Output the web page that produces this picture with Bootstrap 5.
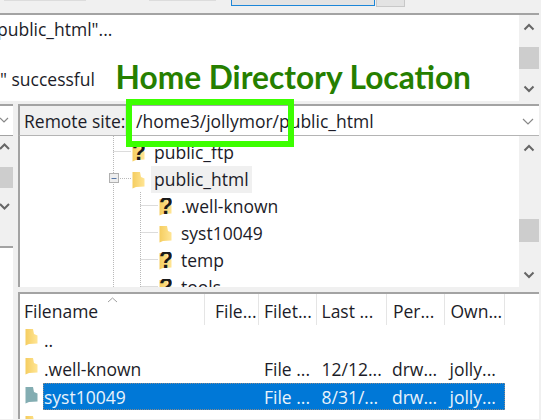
<!DOCTYPE html>
<html lang="en">
<head>
<meta charset="utf-8">
<title>FileZilla home directory location</title>
<link href="https://cdn.jsdelivr.net/npm/bootstrap@5.3.0/dist/css/bootstrap.min.css" rel="stylesheet">
<style>
html,body{margin:0;height:420px;overflow:hidden}
body{background:#f0f0f0;color:#1c1c28;font:17.5px/1 "Open Sans","Noto Sans",sans-serif;width:541px;position:relative}
.fz-top{height:13px}
.fz-stub{height:1px;background:#dcdcdc}
.fz-stub1{width:82px;margin-left:4px}
.fz-stub2{width:67px;margin-left:63px}
.fz-input{width:144px;height:6px;margin-left:15px;background:#e3e3e3;border:1px solid #1c86d8;border-top:0}
.fz-btn{width:29px;height:7px;margin-left:1px;background:#e3e3e3;border:1px solid #c8c8c8;border-top:0}
.fz-log{height:88px;background:#fff;border-top:2px solid #a3a3a3;margin-right:2px}
.fz-logtext{padding-top:5px;white-space:nowrap;overflow:hidden}
.fz-l1{margin:0 0 0 -3px;height:51px;padding-top:1px}
.fz-l2{margin:0;padding-top:0}
.fz-split{height:3px}
.fz-sb{width:20px;background:#f0f0f0;flex:none}
.fz-sb svg{display:block;width:12px;height:8px;stroke:#666;stroke-width:2;fill:none}
.fz-thumb{background:#cdcdcd;width:100%}
.fz-left{width:13px;flex:none;height:315px;background:#fff}
.fz-leftcombo{height:32px;border-top:2px solid #a3a3a3;border-bottom:1px solid #a3a3a3;padding-top:11px}
.fz-leftcombo svg{display:block;width:10px;height:6px;margin-left:-1px;stroke:#888;stroke-width:1.2;fill:none}
.fz-leftsb{height:112px;background:#f0f0f0;border-bottom:2px solid #a3a3a3;padding-top:7px}
.fz-leftsb svg{display:block;width:11px;height:7px;margin-left:-1px;stroke:#666;stroke-width:2;fill:none}
.fz-leftthumb{height:21px;background:#cdcdcd;margin:17px 0 15px}
.fz-right{width:521px;margin-left:5px;flex:none}
.fz-site{height:32px;border-top:2px solid #a3a3a3;border-bottom:1px solid #b4b4b4;border-left:2px solid #a3a3a3}
.fz-sitelabel{width:106px;flex:none;white-space:nowrap;padding:2px 0 0 4px;background:#f0f0f0;border-right:1px solid #dcdcdc}
.fz-combo{background:#fff;padding:2px 0 0 10px}
.fz-combo svg{width:12px;height:7px;stroke:#888;stroke-width:1.2;fill:none;margin-right:5px}
.fz-tree{height:151px;border-left:2px solid #a3a3a3}
.fz-treebody{background:#fff;position:relative;overflow:hidden;padding-top:3px}
.fz-lines{position:absolute;left:0;top:0;width:498px;height:151px}
.fz-node{height:27px;position:relative}
.fz-lv1{padding-left:112px}
.fz-lv2{padding-left:139px}
.fz-name{margin-left:6px;padding:3px 3px 4px 3px;line-height:20px}
.fz-cur{background:#f0f0f0}
.fz-ic{width:13px;height:18px;flex:none;position:relative;display:block}
.fz-q{font:bold 23px/1 "Liberation Sans",sans-serif;fill:#1a1a1a}
.fz-gap{height:5px}
.fz-list{height:127px;background:#fff;border-top:2px solid #a3a3a3;border-left:2px solid #a3a3a3;position:relative;overflow:hidden}
.fz-cols{display:grid;grid-template-columns:185px 54px 57.5px 70.5px 57.5px 60.5px;width:485px}
.fz-head{height:31px;position:relative}
.fz-head>div{border-right:1px solid #e5e5e5;padding:7px 0 0 5px;white-space:nowrap;line-height:20px;overflow:hidden}
.fz-head>div:first-child{padding-left:4px}
.fz-head>div:nth-child(2){padding-left:10px}
.fz-head>div:nth-child(5),.fz-head>div:nth-child(6){padding-left:6px}
.fz-sort{position:absolute;left:87px;top:3px;width:11px;height:6px;stroke:#a0a0a0;stroke-width:1;fill:none}
.fz-item{height:29px;position:relative}
.fz-cols.fz-item>div{padding:5px 0 0 5px;line-height:20px;white-space:nowrap}
.fz-rowic{width:23px;flex:none;padding:3px 0 0 5px}
.fz-rowwrap{height:29px}
.fz-sel{background:#0078d7;color:#e9f3fb;outline:1px dotted #8a8a8a;outline-offset:-1px;width:462px;height:27px}
.fz-sel.fz-cols{grid-template-columns:162px 54px 57.5px 70.5px 57.5px 60.5px}
.fz-cols.fz-sel>div{padding:4px 0 0 5px;line-height:20px;white-space:nowrap}
.fz-cols.fz-sel>div:first-child{padding-left:1px}
.fz-plain{grid-template-columns:162px 54px 57.5px 70.5px 57.5px 60.5px;width:462px}
.fz-plain.fz-cols>div:first-child{padding-left:1px}
.fz-note{position:absolute;left:115.500px;top:59px;margin:0;color:#267f00;font:bold 31.700px/36px "Lato","Liberation Sans",sans-serif;white-space:nowrap}
.fz-mark{position:absolute;left:126px;top:99px;width:168px;height:48px;border:6px solid #3cff00}
</style>
</head>
<body>
<svg width="0" height="0" class="position-absolute">
  <defs>
    <linearGradient id="fzy" x1="0" x2="1" y1="0" y2="0"><stop offset="0" stop-color="#f5cd60"/><stop offset="1" stop-color="#ffe594"/></linearGradient>
    <symbol id="fzf" viewBox="0 0 13 18"><path d="M.5 1H8L9 6 12.500 7.500V15.500L4 16 .5 17.500Z" fill="url(#fzy)"/></symbol>
    <symbol id="fzt" viewBox="0 0 13 18"><path d="M.5 1H8L9 6 12.500 7.500V15.500L4 16 .5 17.500Z" fill="#83adb2"/></symbol>
  </defs>
</svg>

<div class="fz-top d-flex align-items-start">
  <div class="fz-stub fz-stub1"></div>
  <div class="fz-stub fz-stub2"></div>
  <div class="fz-input"></div>
  <div class="fz-btn"></div>
</div>

<div class="fz-log d-flex">
  <div class="fz-logtext flex-grow-1">
    <p class="fz-l1">public_html"...</p>
    <p class="fz-l2">" successful</p>
  </div>
  <div class="fz-sb d-flex flex-column align-items-center">
    <svg class="mt-2" viewBox="0 0 12 8"><path d="M1.500 6.500 6 2l4.500 4.500"/></svg>
    <div class="fz-thumb mt-auto" style="height:22px"></div>
    <svg class="mt-auto mb-2" viewBox="0 0 12 8"><path d="M1.500 1.500 6 6l4.500-4.500"/></svg>
  </div>
</div>
<div class="fz-split"></div>

<div class="d-flex">
  <div class="fz-left">
    <div class="fz-leftcombo"><svg viewBox="0 0 10 6"><path d="M1 1l4 4 4-4"/></svg></div>
    <div class="fz-leftsb">
      <svg viewBox="0 0 11 7"><path d="M1 6l4.500-4.500L10 6"/></svg>
      <div class="fz-leftthumb"></div>
      <svg viewBox="0 0 11 7"><path d="M1 1l4.500 4.500L10 1"/></svg>
    </div>
  </div>
  <div class="fz-right">
    <div class="fz-site d-flex">
      <div class="fz-sitelabel d-flex align-items-center">Remote site:</div>
      <div class="fz-combo flex-grow-1 d-flex align-items-center justify-content-between">
        <span>/home3/jollymor/public_html</span>
        <svg viewBox="0 0 12 7"><path d="M1 1l5 5 5-5"/></svg>
      </div>
    </div>
    <div class="fz-tree d-flex">
      <div class="fz-treebody flex-grow-1">
        <svg class="fz-lines" viewBox="0 0 498 151">
          <g stroke="#b9b9b9" stroke-dasharray="1 1" fill="none">
            <path d="M93.500 0V151M93.500 15.500H111M98 42.500H111M120.500 56V151M120.500 69.500H138M120.500 96.500H138M120.500 123.500H138M120.500 150.500H138"/>
          </g>
          <rect x="89.500" y="37.500" width="9" height="9" fill="#eee" stroke="#b0b0b0"/>
          <path d="M91.500 42.500h5" stroke="#5878a8"/>
        </svg>
        <div class="fz-node fz-lv1 d-flex align-items-center"><svg class="fz-ic" viewBox="0 0 13 18"><use href="#fzf"/><text class="fz-q" x="0" y="16">?</text></svg><span class="fz-name">public_ftp</span></div>
        <div class="fz-node fz-lv1 d-flex align-items-center"><svg class="fz-ic" viewBox="0 0 13 18"><use href="#fzf"/></svg><span class="fz-name fz-cur">public_html</span></div>
        <div class="fz-node fz-lv2 d-flex align-items-center"><svg class="fz-ic" viewBox="0 0 13 18"><use href="#fzf"/><text class="fz-q" x="0" y="16">?</text></svg><span class="fz-name">.well-known</span></div>
        <div class="fz-node fz-lv2 d-flex align-items-center"><svg class="fz-ic" viewBox="0 0 13 18"><use href="#fzf"/></svg><span class="fz-name">syst10049</span></div>
        <div class="fz-node fz-lv2 d-flex align-items-center"><svg class="fz-ic" viewBox="0 0 13 18"><use href="#fzf"/><text class="fz-q" x="0" y="16">?</text></svg><span class="fz-name">temp</span></div>
        <div class="fz-node fz-lv2 d-flex align-items-center"><svg class="fz-ic" viewBox="0 0 13 18"><use href="#fzf"/><text class="fz-q" x="0" y="16">?</text></svg><span class="fz-name">tools</span></div>
      </div>
      <div class="fz-sb d-flex flex-column align-items-center">
        <svg class="mt-2" viewBox="0 0 12 8"><path d="M1.500 6.500 6 2l4.500 4.500"/></svg>
        <div class="fz-thumb mt-auto" style="height:23px;margin-bottom:29px"></div>
        <svg class="mb-2" viewBox="0 0 12 8"><path d="M1.500 1.500 6 6l4.500-4.500"/></svg>
      </div>
    </div>
    <div class="fz-gap"></div>
    <div class="fz-list">
      <svg class="fz-sort" viewBox="0 0 11 6"><path d="M1 5l4.500-4L10 5"/></svg>
      <div class="fz-cols fz-head">
        <div>Filename</div><div>File...</div><div>Filet...</div><div>Last ...</div><div>Per...</div><div>Own...</div>
      </div>
      <div class="d-flex fz-rowwrap">
        <div class="fz-rowic"><svg class="fz-ic" viewBox="0 0 13 18"><use href="#fzf"/></svg></div>
        <div class="fz-cols fz-plain fz-item"><div>..</div></div>
      </div>
      <div class="d-flex fz-rowwrap">
        <div class="fz-rowic"><svg class="fz-ic" viewBox="0 0 13 18"><use href="#fzf"/></svg></div>
        <div class="fz-cols fz-plain fz-item"><div>.well-known</div><div></div><div>File ...</div><div>12/12...</div><div>drw...</div><div>jolly...</div></div>
      </div>
      <div class="d-flex fz-rowwrap">
        <div class="fz-rowic"><svg class="fz-ic" viewBox="0 0 13 18"><use href="#fzt"/></svg></div>
        <div class="fz-cols fz-sel"><div>syst10049</div><div></div><div>File ...</div><div>8/31/...</div><div>drw...</div><div>jolly...</div></div>
      </div>
      <div class="d-flex fz-rowwrap">
        <div class="fz-rowic"><svg class="fz-ic" viewBox="0 0 13 18"><use href="#fzf"/></svg></div>
      </div>
    </div>
  </div>
</div>

<h1 class="fz-note">Home Directory Location</h1>
<div class="fz-mark"></div>
<script src="https://cdn.jsdelivr.net/npm/bootstrap@5.3.0/dist/js/bootstrap.bundle.min.js"></script>
</body>
</html>
